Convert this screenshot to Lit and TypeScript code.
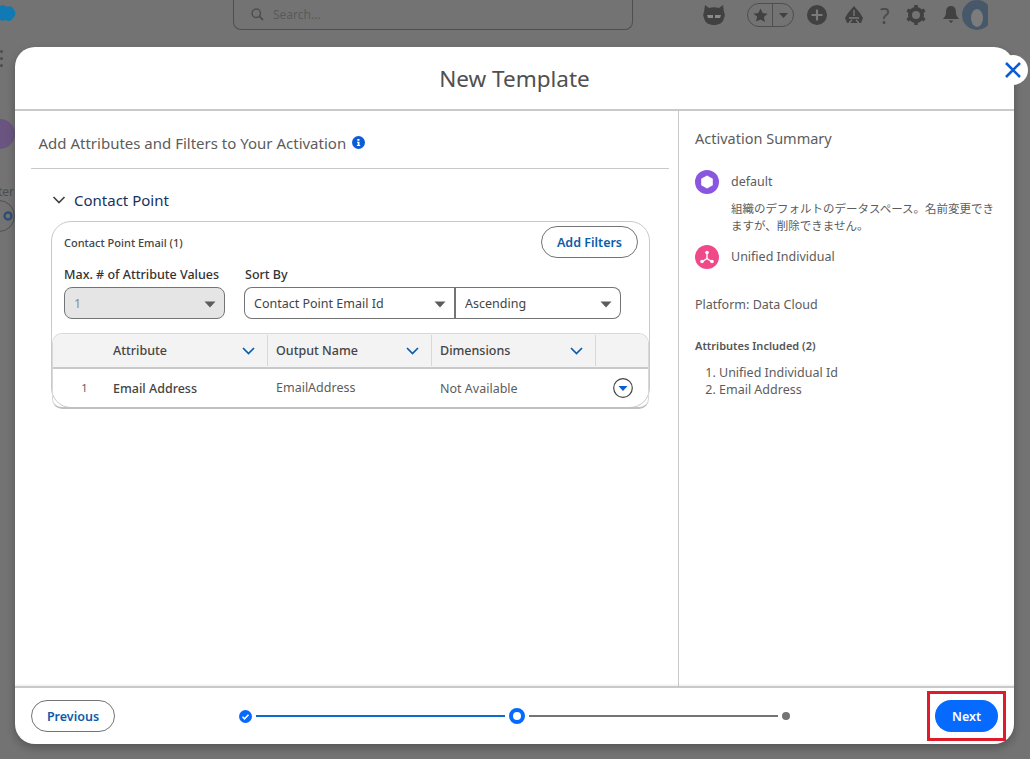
import { css, html, LitElement, svg } from "lit";
import { customElement, property } from "lit/decorators.js";

const caret = svg`<svg class="caret" width="12" height="7" viewBox="0 0 12 7"><path d="M0.5 0.5h11L6 6.5z" fill="currentColor"/></svg>`;
const chevron = svg`<svg class="chev" width="13" height="8" viewBox="0 0 13 8"><path d="M1 1l5.5 5.5L12 1" fill="none" stroke="currentColor" stroke-width="1.7"/></svg>`;

@customElement("pick-box")
export class PickBox extends LitElement {
    static styles = css`
        :host {
            display: flex;
            align-items: center;
            justify-content: space-between;
            box-sizing: border-box;
            height: 32px;
            padding: 0 8px 0 9px;
            border: 1px solid #747474;
            background: #fff;
            color: #444;
            font-size: 12.5px;
        }
        .caret {
            color: #5c5c5c;
            margin-top: 2px;
        }
    `;

    @property() label = "";

    protected render() {
        return html`<span>${this.label}</span>${caret}`;
    }
}

@customElement("app-root")
export class AppRoot extends LitElement {
    static styles = css`
        :host {
            display: block;
            position: relative;
            width: 1030px;
            height: 759px;
            overflow: hidden;
            background: #737373;
            font-family: "Noto Sans", "Noto Sans CJK JP", sans-serif;
            color: #444;
        }

        /* page behind the dialog */
        .topbar {
            display: grid;
            grid-template-columns: 233px 400px 1fr;
            height: 47px;
        }
        .cloud {
            margin-top: 5px;
        }
        .search {
            box-sizing: border-box;
            height: 31px;
            margin-top: -1px;
            padding-left: 17px;
            display: flex;
            align-items: center;
            gap: 9px;
            border: 1px solid #4e4e4e;
            border-top: none;
            border-radius: 0 0 8px 8px;
            color: #5a5a5a;
            font-size: 12px;
        }
        .tools {
            display: flex;
            align-items: center;
            height: 30px;
            padding-left: 69px;
            color: #414141;
        }
        .fav {
            box-sizing: border-box;
            display: flex;
            width: 47px;
            height: 24px;
            margin-left: 21px;
            align-items: center;
            border: 1px solid #4e4e4e;
            border-radius: 12px;
        }
        .fav span {
            display: flex;
            justify-content: center;
            flex: 1;
        }
        .fav span + span {
            flex: 0 0 20px;
            height: 100%;
            align-items: center;
            border-left: 1px solid #4e4e4e;
        }
        .rail {
            display: flex;
            flex-direction: column;
            align-items: flex-start;
            width: 15px;
            overflow: hidden;
        }
        .dots {
            display: flex;
            flex-direction: column;
            gap: 4px;
            margin-top: 3px;
        }
        .dots i {
            width: 3px;
            height: 3px;
            background: #4c4c4c;
            border-radius: 50%;
        }
        .badge {
            width: 30px;
            height: 30px;
            margin: 52px 0 0 -15px;
            flex: none;
            border-radius: 50%;
            background: #6a5580;
        }
        .ter {
            margin: 34px 0 0 -2px;
            font-size: 12px;
            color: #4d4d4d;
        }
        .gear-pill {
            box-sizing: border-box;
            width: 40px;
            height: 32px;
            margin: 0 0 0 -25px;
            flex: none;
            padding-left: 26px;
            display: flex;
            align-items: center;
            border: 1px solid #505050;
            border-radius: 16px;
            color: #2f4f77;
        }

        /* dialog */
        .modal {
            position: absolute;
            left: 15px;
            top: 47px;
            width: 999px;
            height: 697px;
            display: flex;
            flex-direction: column;
            background: #fff;
            border-radius: 20px;
            box-shadow: 0 4px 8px rgba(0, 0, 0, 0.25);
        }
        .close {
            position: absolute;
            left: 983px;
            top: 8px;
            width: 30px;
            height: 30px;
            display: flex;
            align-items: center;
            justify-content: center;
            background: #fff;
            border-radius: 50%;
            color: #0b5cd5;
        }
        .head {
            box-sizing: border-box;
            flex: none;
            height: 64px;
            padding-top: 15px;
            border-bottom: 2px solid #c9c9c9;
            text-align: center;
            font-size: 22.5px;
            line-height: 33px;
            color: #505050;
        }
        .body {
            flex: 1;
            display: flex;
            min-height: 0;
        }
        .main {
            box-sizing: border-box;
            width: 664px;
            padding: 0 9px 0 16px;
            border-right: 1px solid #c9c9c9;
        }
        .main-title {
            display: flex;
            align-items: center;
            gap: 6px;
            height: 51px;
            padding: 6px 0 0 7.5px;
            box-sizing: content-box;
            border-bottom: 1px solid #c9c9c9;
            font-size: 15px;
            color: #5c5c5c;
        }
        .section {
            display: flex;
            align-items: center;
            gap: 8px;
            margin: 20px 0 0 21px;
            height: 22px;
            font-size: 15px;
            color: #16325c;
        }
        .section .chev {
            width: 14px;
            color: #444;
        }
        .card {
            box-sizing: border-box;
            width: 599px;
            height: 187px;
            margin: 10px 0 0 20px;
            padding: 4px 9px 0 12px;
            border: 1px solid #c9c9c9;
            border-radius: 20px;
        }
        .card-top {
            display: flex;
            align-items: center;
            justify-content: space-between;
            height: 32px;
            padding-right: 2px;
            font-size: 11px;
            font-weight: 500;
            color: #444;
        }
        .pill {
            box-sizing: border-box;
            display: flex;
            align-items: center;
            justify-content: center;
            height: 32px;
            border: 1px solid #747474;
            border-radius: 16px;
            background: #fff;
            color: #0b5cab;
            font-size: 12.5px;
            font-weight: 600;
        }
        .add {
            width: 97px;
        }
        .fields {
            display: grid;
            grid-template-columns: 161px 231px 165px;
            column-gap: 0;
            margin-top: 8px;
        }
        .fields label {
            height: 21px;
            font-size: 12.5px;
            font-weight: 500;
            line-height: 18px;
            color: #333;
        }
        .fields label + label {
            padding-left: 20px;
        }
        .f1 {
            grid-column: 1;
            grid-row: 2;
            background: #e5e5e5;
            border-radius: 8px;
            color: #8a8a8a;
        }
        .f2 {
            grid-column: 2;
            grid-row: 2;
            margin-left: 19px;
            border-radius: 8px 0 0 8px;
            border-right-width: 2px;
        }
        .f3 {
            grid-column: 3;
            grid-row: 2;
            border-left: none;
            border-radius: 0 8px 8px 0;
        }
        .grid {
            box-sizing: border-box;
            width: 597px;
            margin: 14px 0 0 -12px;
            border: 1px solid #d8d8d8;
            border-bottom: 2px solid #c0c0c0;
            border-radius: 10px;
            overflow: hidden;
            font-size: 12.5px;
        }
        .row {
            display: grid;
            grid-template-columns: 215px 164px 164px 1fr;
        }
        .row.th {
            height: 33px;
            background: #f3f3f3;
            border-bottom: 2px solid #c9c9c9;
            font-weight: 500;
            color: #444;
        }
        .row.td {
            height: 38px;
            align-items: center;
        }
        .th > div {
            display: flex;
            align-items: center;
            justify-content: space-between;
            padding: 0 12px 0 8px;
            border-right: 1px solid #d8d8d8;
            margin: 1px 0;
        }
        .th > div:first-child {
            padding-left: 60px;
        }
        .th > div:last-child {
            border-right: none;
        }
        .th .chev {
            color: #0b5cab;
        }
        .td > div {
            padding-left: 8px;
            color: #5c5c5c;
        }
        .td .name {
            display: flex;
            padding-left: 0;
            color: #444;
            font-weight: 500;
        }
        .td .num {
            width: 60px;
            text-align: center;
            padding-left: 3px;
            box-sizing: border-box;
            font-size: 11px;
            font-weight: 400;
            color: #5c5c5c;
        }
        .td .out {
            margin-top: -2px;
        }
        .td .act {
            display: flex;
            justify-content: flex-end;
            padding-right: 15px;
        }

        .side {
            flex: 1;
            padding: 16px 16px 0;
            font-size: 12.5px;
            color: #5c5c5c;
        }
        .side h2 {
            margin: 0;
            font-size: 14.5px;
            font-weight: 400;
            line-height: 22px;
            color: #5c5c5c;
        }
        .entry {
            display: grid;
            grid-template-columns: 24px 1fr;
            column-gap: 12px;
            align-items: center;
            margin-top: 21px;
            line-height: 24px;
        }
        .entry + .entry {
            margin-top: 0;
        }
        .desc {
            grid-column: 2;
            margin: 7px 0 11px;
            font-size: 11.5px;
            line-height: 16.5px;
        }
        .platform {
            margin-top: 26px;
            line-height: 20px;
        }
        .attrs {
            margin-top: 21px;
            font-size: 11px;
            font-weight: 600;
            line-height: 20px;
            color: #555;
        }
        ol {
            margin: 8px 0 0;
            padding: 0 0 0 24px;
            line-height: 17px;
        }

        .foot {
            box-sizing: border-box;
            flex: none;
            height: 58px;
            display: grid;
            grid-template-columns: 1fr auto 1fr;
            align-items: center;
            padding: 0 16px;
            border-top: 2px solid #c9c9c9;
            box-shadow: 0 -1px 2px rgba(0, 0, 0, 0.08);
        }
        .prev {
            width: 84px;
        }
        .stepper {
            display: flex;
            align-items: center;
        }
        .bar {
            width: 249px;
            height: 2px;
            background: #0b6ccb;
            margin: 0 4px;
        }
        .bar.rest {
            background: #747474;
        }
        .ring {
            box-sizing: border-box;
            width: 16px;
            height: 16px;
            margin: 0 0 0 0;
            border: 4px solid #066afe;
            border-radius: 50%;
        }
        .pt {
            width: 8px;
            height: 8px;
            border-radius: 50%;
            background: #747474;
        }
        .next-wrap {
            position: relative;
            justify-self: end;
        }
        .next {
            width: 63px;
            border: none;
            background: #066afe;
            color: #fff;
        }
        .mark {
            position: absolute;
            left: -8px;
            top: -9px;
            width: 79px;
            height: 50px;
            box-sizing: border-box;
            border: 3px solid #e01b2b;
        }
    `;

    protected render() {
        return html`
            <div class="topbar">
                <svg class="cloud" width="16" height="21" viewBox="0 0 16 21"><path d="M0 1c2-1 5-1 6 1 3-2 7 0 8 3 2 2 2 6-1 8-1 3-5 4-7 2-2 1-4 1-6 0z" fill="#0f7ab3"/></svg>
                <div class="search">
                    <svg width="13" height="13" viewBox="0 0 13 13"><circle cx="5.3" cy="5.3" r="4.2" fill="none" stroke="#4e4e4e" stroke-width="1.5"/><path d="M8.4 8.4L12 12" stroke="#4e4e4e" stroke-width="1.8"/></svg>
                    <span>Search...</span>
                </div>
                <div class="tools">
                    <svg width="24" height="24" viewBox="0 0 24 24"><path d="M3 2l4 3c3-1 7-1 10 0l4-3 1 7c1 2 1 4 0 6-1 5-5 7-10 7S3 20 2 15c-1-2-1-4 0-6z" fill="#414141"/><path d="M5 12h6v3H6zM13 12h6l-1 3h-5z" fill="#8a8a8a"/></svg>
                    <div class="fav">
                        <span><svg width="15" height="15" viewBox="0 0 15 15"><path d="M7.5 0.5l2.1 4.6 5 .6-3.7 3.4 1 4.9-4.4-2.5L3.1 13.5l1-4.9L.4 5.700l5-.6z" fill="#414141"/></svg></span>
                        <span><svg width="9" height="5" viewBox="0 0 9 5"><path d="M0 0h9L4.500 5z" fill="#414141"/></svg></span>
                    </div>
                    <svg style="margin-left:13px" width="20" height="20" viewBox="0 0 20 20"><circle cx="10" cy="10" r="10" fill="#414141"/><path d="M10 4.500v11M4.500 10h11" stroke="#7a7a7a" stroke-width="2.200"/></svg>
                    <svg style="margin-left:17px" width="20" height="20" viewBox="0 0 20 20"><path d="M10 1l6 7 3 5-2 5H3l-2-5 3-5z" fill="#414141"/><path d="M10 5v6M5 13h10M8 15l-3 3M12 15l3 3" stroke="#7a7a7a" stroke-width="1.300"/></svg>
                    <span style="margin-left:16px;font-size:22px;color:#4a4a4a">?</span>
                    <svg style="margin-left:16px" width="20" height="20" viewBox="0 0 20 20"><circle cx="10" cy="10" r="6" fill="none" stroke="#414141" stroke-width="4"/><path d="M10 0v4M10 16v4M1.300 5l3.400 2M15.300 13l3.400 2M1.300 15l3.400-2M15.300 7l3.400-2" stroke="#414141" stroke-width="3.500"/></svg>
                    <svg style="margin-left:16px" width="18" height="20" viewBox="0 0 18 20"><path d="M9 1c4 0 5 3 5 7 0 3 2 4 3 6H1c1-2 3-3 3-6 0-4 1-7 5-7zM6.500 15.500h5L9 18z" fill="#414141"/></svg>
                    <svg style="margin-left:2px" width="26" height="30" viewBox="0 0 26 30"><circle cx="15" cy="15" r="15" fill="#48586b"/><ellipse cx="15" cy="18" rx="6" ry="9" fill="#7c7c7c"/></svg>
                </div>
            </div>
            <div class="rail">
                <div class="dots"><i></i><i></i><i></i></div>
                <div class="badge"></div>
                <div class="ter">ter</div>
                <div class="gear-pill">
                    <svg width="12" height="12" viewBox="0 0 12 12"><circle cx="6" cy="6" r="3.500" fill="none" stroke="currentColor" stroke-width="2.500"/></svg>
                </div>
            </div>

            <div class="modal">
                <div class="head">New Template</div>
                <div class="body">
                    <div class="main">
                        <div class="main-title">
                            <span>Add Attributes and Filters to Your Activation</span>
                            <svg width="13" height="13" viewBox="0 0 13 13"><circle cx="6.500" cy="6.500" r="6.500" fill="#0b5cd5"/><path d="M5.300 3h2.200v1.700H5.300zM5 5.700h2.500v3.300h.7v1.100H4.900V9h.8V6.800H5z" fill="#fff"/></svg>
                        </div>
                        <div class="section">${chevron}<span>Contact Point</span></div>
                        <div class="card">
                            <div class="card-top">
                                <span>Contact Point Email (1)</span>
                                <div class="pill add">Add Filters</div>
                            </div>
                            <div class="fields">
                                <label>Max. # of Attribute Values</label>
                                <label>Sort By</label>
                                <span></span>
                                <pick-box class="f1" label="1"></pick-box>
                                <pick-box class="f2" label="Contact Point Email Id"></pick-box>
                                <pick-box class="f3" label="Ascending"></pick-box>
                            </div>
                            <div class="grid">
                                <div class="row th">
                                    <div>Attribute ${chevron}</div>
                                    <div>Output Name ${chevron}</div>
                                    <div>Dimensions ${chevron}</div>
                                    <div></div>
                                </div>
                                <div class="row td">
                                    <div class="name"><span class="num">1</span>Email Address</div>
                                    <div class="out">EmailAddress</div>
                                    <div>Not Available</div>
                                    <div class="act">
                                        <svg width="20" height="20" viewBox="0 0 20 20"><circle cx="10" cy="10" r="9.300" fill="#fff" stroke="#444" stroke-width="1.200"/><path d="M5.500 8h9L10 13z" fill="#0b5cd5"/></svg>
                                    </div>
                                </div>
                            </div>
                        </div>
                    </div>
                    <div class="side">
                        <h2>Activation Summary</h2>
                        <div class="entry">
                            <svg width="24" height="24" viewBox="0 0 24 24"><circle cx="12" cy="12" r="12" fill="#8a56e0"/><path d="M12 5.500l5.800 3.200v6.600L12 18.500l-5.800-3.200V8.700z" fill="#fff"/></svg>
                            <span>default</span>
                            <div class="desc">組織のデフォルトのデータスペース。名前変更できますが、削除できません。</div>
                        </div>
                        <div class="entry">
                            <svg width="24" height="24" viewBox="0 0 24 24"><circle cx="12" cy="12" r="12" fill="#f0498a"/><path d="M12 8v5.500M12 13.500l-4.500 3M12 13.500l4.500 3" stroke="#fff" stroke-width="1.400"/><circle cx="12" cy="7.500" r="1.800" fill="#fff"/><circle cx="7" cy="16.500" r="1.800" fill="#fff"/><circle cx="17" cy="16.500" r="1.800" fill="#fff"/></svg>
                            <span>Unified Individual</span>
                        </div>
                        <div class="platform">Platform: Data Cloud</div>
                        <div class="attrs">Attributes Included (2)</div>
                        <ol>
                            <li>Unified Individual Id</li>
                            <li>Email Address</li>
                        </ol>
                    </div>
                </div>
                <div class="foot">
                    <div class="pill prev">Previous</div>
                    <div class="stepper">
                        <svg width="13" height="13" viewBox="0 0 13 13"><circle cx="6.500" cy="6.500" r="6.500" fill="#066afe"/><path d="M3.500 6.800l2 2 4-4" fill="none" stroke="#fff" stroke-width="1.600"/></svg>
                        <div class="bar"></div>
                        <div class="ring"></div>
                        <div class="bar rest"></div>
                        <div class="pt"></div>
                    </div>
                    <div class="next-wrap">
                        <div class="pill next">Next</div>
                        <div class="mark"></div>
                    </div>
                </div>
                <div class="close">
                    <svg width="18" height="18" viewBox="0 0 18 18"><path d="M2 2l14 14M16 2L2 16" stroke="currentColor" stroke-width="2.600"/></svg>
                </div>
            </div>
        `;
    }
}
